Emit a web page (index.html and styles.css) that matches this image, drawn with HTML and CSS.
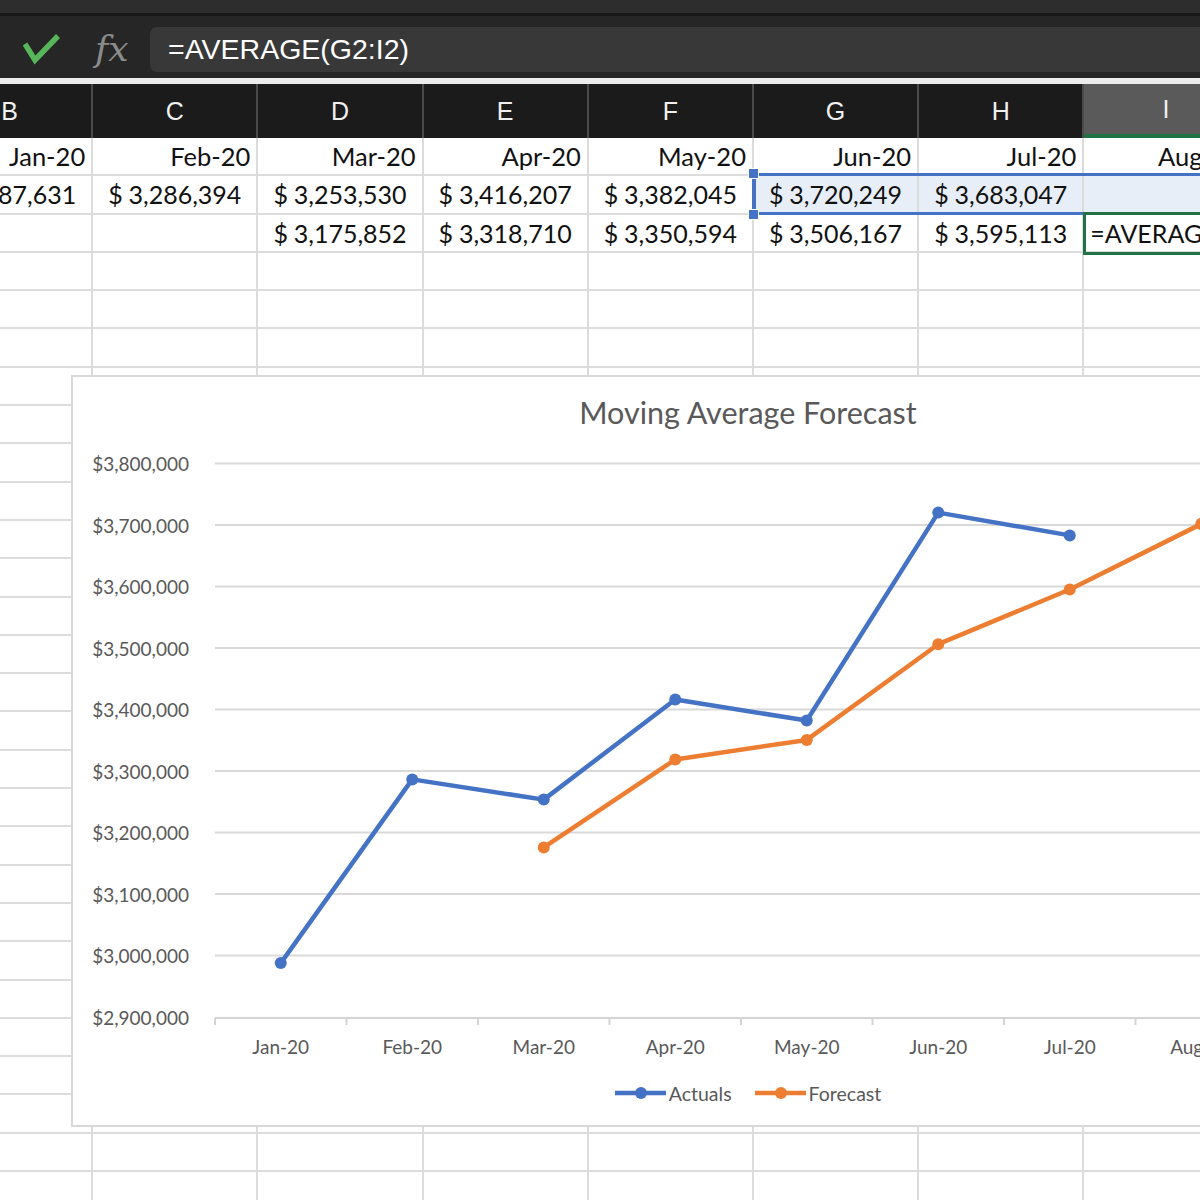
FILE: index.html
```html
<!DOCTYPE html>
<html lang="en">
<head>
<meta charset="utf-8">
<title>Moving Average Forecast</title>
<link rel="stylesheet" href="styles.css">
</head>
<body>
<div class="topband"></div>
<div class="formula-bar">
  <div class="fb-icons">
    <svg class="check" width="38" height="32" viewBox="0 0 38 32"><polyline points="2,11 12,27 35,3" fill="none" stroke="#57b65a" stroke-width="5.5" stroke-linejoin="miter"/></svg>
    <span class="fx">fx</span>
  </div>
  <div class="fb-input">=AVERAGE(G2:I2)</div>
</div>
<div class="sheet">
  <div class="col-heads">
    <div class="ch">B</div><div class="ch">C</div><div class="ch">D</div><div class="ch">E</div><div class="ch">F</div><div class="ch">G</div><div class="ch">H</div><div class="ch active">I</div>
  </div>
  <div class="row">
    <div class="c dt">Jan-20</div><div class="c dt">Feb-20</div><div class="c dt">Mar-20</div><div class="c dt">Apr-20</div><div class="c dt">May-20</div><div class="c dt">Jun-20</div><div class="c dt">Jul-20</div><div class="c dt">Aug-20</div>
  </div>
  <div class="row">
    <div class="c acc"><span>$</span><span>2,987,631</span></div>
    <div class="c acc"><span>$</span><span>3,286,394</span></div>
    <div class="c acc"><span>$</span><span>3,253,530</span></div>
    <div class="c acc"><span>$</span><span>3,416,207</span></div>
    <div class="c acc"><span>$</span><span>3,382,045</span></div>
    <div class="c acc hl"><span>$</span><span>3,720,249</span></div>
    <div class="c acc hl"><span>$</span><span>3,683,047</span></div>
    <div class="c hl"></div>
  </div>
  <div class="row">
    <div class="c"></div><div class="c"></div>
    <div class="c acc"><span>$</span><span>3,175,852</span></div>
    <div class="c acc"><span>$</span><span>3,318,710</span></div>
    <div class="c acc"><span>$</span><span>3,350,594</span></div>
    <div class="c acc"><span>$</span><span>3,506,167</span></div>
    <div class="c acc"><span>$</span><span>3,595,113</span></div>
    <div class="c fm">=AVERAGE(G2:I2)</div>
  </div>
  <div class="row"><div class="c"></div><div class="c"></div><div class="c"></div><div class="c"></div><div class="c"></div><div class="c"></div><div class="c"></div><div class="c"></div></div>
  <div class="row"><div class="c"></div><div class="c"></div><div class="c"></div><div class="c"></div><div class="c"></div><div class="c"></div><div class="c"></div><div class="c"></div></div>
  <div class="row"><div class="c"></div><div class="c"></div><div class="c"></div><div class="c"></div><div class="c"></div><div class="c"></div><div class="c"></div><div class="c"></div></div>
  <div class="row"><div class="c"></div><div class="c"></div><div class="c"></div><div class="c"></div><div class="c"></div><div class="c"></div><div class="c"></div><div class="c"></div></div>
  <div class="row"><div class="c"></div><div class="c"></div><div class="c"></div><div class="c"></div><div class="c"></div><div class="c"></div><div class="c"></div><div class="c"></div></div>
  <div class="row"><div class="c"></div><div class="c"></div><div class="c"></div><div class="c"></div><div class="c"></div><div class="c"></div><div class="c"></div><div class="c"></div></div>
  <div class="row"><div class="c"></div><div class="c"></div><div class="c"></div><div class="c"></div><div class="c"></div><div class="c"></div><div class="c"></div><div class="c"></div></div>
  <div class="row"><div class="c"></div><div class="c"></div><div class="c"></div><div class="c"></div><div class="c"></div><div class="c"></div><div class="c"></div><div class="c"></div></div>
  <div class="row"><div class="c"></div><div class="c"></div><div class="c"></div><div class="c"></div><div class="c"></div><div class="c"></div><div class="c"></div><div class="c"></div></div>
  <div class="row"><div class="c"></div><div class="c"></div><div class="c"></div><div class="c"></div><div class="c"></div><div class="c"></div><div class="c"></div><div class="c"></div></div>
  <div class="row"><div class="c"></div><div class="c"></div><div class="c"></div><div class="c"></div><div class="c"></div><div class="c"></div><div class="c"></div><div class="c"></div></div>
  <div class="row"><div class="c"></div><div class="c"></div><div class="c"></div><div class="c"></div><div class="c"></div><div class="c"></div><div class="c"></div><div class="c"></div></div>
  <div class="row"><div class="c"></div><div class="c"></div><div class="c"></div><div class="c"></div><div class="c"></div><div class="c"></div><div class="c"></div><div class="c"></div></div>
  <div class="row"><div class="c"></div><div class="c"></div><div class="c"></div><div class="c"></div><div class="c"></div><div class="c"></div><div class="c"></div><div class="c"></div></div>
  <div class="row"><div class="c"></div><div class="c"></div><div class="c"></div><div class="c"></div><div class="c"></div><div class="c"></div><div class="c"></div><div class="c"></div></div>
  <div class="row"><div class="c"></div><div class="c"></div><div class="c"></div><div class="c"></div><div class="c"></div><div class="c"></div><div class="c"></div><div class="c"></div></div>
  <div class="row"><div class="c"></div><div class="c"></div><div class="c"></div><div class="c"></div><div class="c"></div><div class="c"></div><div class="c"></div><div class="c"></div></div>
  <div class="row"><div class="c"></div><div class="c"></div><div class="c"></div><div class="c"></div><div class="c"></div><div class="c"></div><div class="c"></div><div class="c"></div></div>
  <div class="row"><div class="c"></div><div class="c"></div><div class="c"></div><div class="c"></div><div class="c"></div><div class="c"></div><div class="c"></div><div class="c"></div></div>
  <div class="row"><div class="c"></div><div class="c"></div><div class="c"></div><div class="c"></div><div class="c"></div><div class="c"></div><div class="c"></div><div class="c"></div></div>
  <div class="row"><div class="c"></div><div class="c"></div><div class="c"></div><div class="c"></div><div class="c"></div><div class="c"></div><div class="c"></div><div class="c"></div></div>
  <div class="row"><div class="c"></div><div class="c"></div><div class="c"></div><div class="c"></div><div class="c"></div><div class="c"></div><div class="c"></div><div class="c"></div></div>
  <div class="row"><div class="c"></div><div class="c"></div><div class="c"></div><div class="c"></div><div class="c"></div><div class="c"></div><div class="c"></div><div class="c"></div></div>
  <div class="row"><div class="c"></div><div class="c"></div><div class="c"></div><div class="c"></div><div class="c"></div><div class="c"></div><div class="c"></div><div class="c"></div></div>
  <div class="row"><div class="c"></div><div class="c"></div><div class="c"></div><div class="c"></div><div class="c"></div><div class="c"></div><div class="c"></div><div class="c"></div></div>

  <div class="selection"><i class="handle h-top"></i><i class="handle h-bot"></i></div>
  <div class="active-cell"></div>

  <div class="chart">
    <div class="chart-title">Moving Average Forecast</div>
    <svg class="plot" width="1350" height="630" viewBox="73 435 1350 630">
      <g class="grid-lines">
        <line x1="215" x2="1423" y1="463.5" y2="463.5"/>
        <line x1="215" x2="1423" y1="525" y2="525"/>
        <line x1="215" x2="1423" y1="586.5" y2="586.5"/>
        <line x1="215" x2="1423" y1="648" y2="648"/>
        <line x1="215" x2="1423" y1="709.5" y2="709.5"/>
        <line x1="215" x2="1423" y1="771" y2="771"/>
        <line x1="215" x2="1423" y1="832.5" y2="832.5"/>
        <line x1="215" x2="1423" y1="894" y2="894"/>
        <line x1="215" x2="1423" y1="955.5" y2="955.5"/>
      </g>
      <g class="axis">
        <line x1="215" x2="1423" y1="1018" y2="1018"/>
        <line x1="215" x2="215" y1="1018" y2="1025"/>
        <line x1="346.5" x2="346.5" y1="1018" y2="1025"/>
        <line x1="478" x2="478" y1="1018" y2="1025"/>
        <line x1="609.5" x2="609.5" y1="1018" y2="1025"/>
        <line x1="741" x2="741" y1="1018" y2="1025"/>
        <line x1="872.5" x2="872.5" y1="1018" y2="1025"/>
        <line x1="1004" x2="1004" y1="1018" y2="1025"/>
        <line x1="1135.5" x2="1135.5" y1="1018" y2="1025"/>
        <line x1="1267" x2="1267" y1="1018" y2="1025"/>
      </g>
      <g class="ylabels">
        <text x="189" y="463.5">$3,800,000</text>
        <text x="189" y="525">$3,700,000</text>
        <text x="189" y="586.5">$3,600,000</text>
        <text x="189" y="648">$3,500,000</text>
        <text x="189" y="709.5">$3,400,000</text>
        <text x="189" y="771">$3,300,000</text>
        <text x="189" y="832.5">$3,200,000</text>
        <text x="189" y="894">$3,100,000</text>
        <text x="189" y="955.5">$3,000,000</text>
        <text x="189" y="1017">$2,900,000</text>
      </g>
      <g class="xlabels">
        <text x="280.75" y="1046">Jan-20</text>
        <text x="412.25" y="1046">Feb-20</text>
        <text x="543.75" y="1046">Mar-20</text>
        <text x="675.25" y="1046">Apr-20</text>
        <text x="806.75" y="1046">May-20</text>
        <text x="938.25" y="1046">Jun-20</text>
        <text x="1069.75" y="1046">Jul-20</text>
        <text x="1201.25" y="1046">Aug-20</text>
      </g>
      <g class="series actual">
        <polyline points="280.75,963.1 412.25,779.4 543.75,799.6 675.25,699.5 806.75,720.5 938.25,512.6 1069.75,535.4"/>
        <circle cx="280.75" cy="963.1" r="6"/>
        <circle cx="412.25" cy="779.4" r="6"/>
        <circle cx="543.75" cy="799.6" r="6"/>
        <circle cx="675.25" cy="699.5" r="6"/>
        <circle cx="806.75" cy="720.5" r="6"/>
        <circle cx="938.25" cy="512.6" r="6"/>
        <circle cx="1069.75" cy="535.4" r="6"/>
      </g>
      <g class="series forecast">
        <polyline points="543.75,847.4 675.25,759.5 806.75,739.9 938.25,644.2 1069.75,589.5 1201.25,524"/>
        <circle cx="543.75" cy="847.4" r="6"/>
        <circle cx="675.25" cy="759.5" r="6"/>
        <circle cx="806.75" cy="739.9" r="6"/>
        <circle cx="938.25" cy="644.2" r="6"/>
        <circle cx="1069.75" cy="589.5" r="6"/>
        <circle cx="1201.25" cy="524" r="6"/>
      </g>
    </svg>
    <div class="legend">
      <div class="legend-item">
        <svg width="51" height="14" viewBox="0 0 51 14"><line x1="0" y1="7" x2="51" y2="7" stroke="#4472c4" stroke-width="4.5"/><circle cx="26" cy="7" r="6" fill="#4472c4"/></svg>
        <span>Actuals</span>
      </div>
      <div class="legend-item">
        <svg width="51" height="14" viewBox="0 0 51 14"><line x1="0" y1="7" x2="51" y2="7" stroke="#ed7d31" stroke-width="4.5"/><circle cx="26" cy="7" r="6" fill="#ed7d31"/></svg>
        <span>Forecast</span>
      </div>
    </div>
  </div>
</div>
</body>
</html>
```
FILE: styles.css
```css
* { box-sizing: border-box; }
html, body { margin: 0; padding: 0; }
body {
  width: 1200px;
  height: 1200px;
  overflow: hidden;
  background: #ffffff;
  font-family: Lato, "Liberation Sans", sans-serif;
  color: #111;
}

/* ---------- top chrome ---------- */
.topband {
  height: 16px;
  background: #2d2d2d;
  border-bottom: 3px solid #171717;
}
.formula-bar {
  height: 68px;
  background: #262626;
  border-bottom: 6px solid #ececec;
  display: flex;
  align-items: flex-start;
}
.fb-icons {
  width: 150px;
  flex: none;
  display: flex;
  align-items: flex-start;
  padding-left: 23px;
}
.check { margin-top: 17px; flex: none; }
.fx {
  margin-left: 34px;
  margin-top: 13px;
  font-family: "DejaVu Serif", "Liberation Serif", serif;
  font-style: italic;
  font-size: 36px;
  line-height: 40px;
  color: #8b8b8b;
}
.fb-input {
  flex: 1;
  margin-top: 11px;
  height: 45px;
  background: #383838;
  border-radius: 7px 0 0 7px;
  padding-left: 18px;
  font-family: "Liberation Sans", sans-serif;
  font-size: 28.5px;
  line-height: 45px;
  color: #ffffff;
}

/* ---------- sheet ---------- */
.sheet {
  position: relative;
  width: 1200px;
}
.col-heads, .row {
  display: grid;
  grid-template-columns: repeat(8, 165.2px);
  margin-left: -72px;
}
.col-heads {
  height: 54px;
  background: #1b1b1b;
}
.ch {
  border-right: 2px solid #4a4a4a;
  color: #f0f0f0;
  font-family: "Liberation Sans", sans-serif;
  font-size: 25px;
  line-height: 54px;
  text-align: center;
}
.ch.active {
  background: #5a5a5a;
  border-bottom: 4px solid #217346;
  line-height: 50px;
}
.row { height: 38.3px; }
.c {
  border-right: 2px solid #dcdcdc;
  border-bottom: 2px solid #dcdcdc;
  font-size: 25px;
  line-height: 36px;
  white-space: nowrap;
  color: #111;
}
.dt { text-align: right; padding-right: 6px; font-size: 25.5px; }
.acc {
  display: flex;
  justify-content: space-between;
  padding: 0 15px 0 15px;
}
.hl { background: #e8eef8; }
.fm { padding-left: 6px; overflow: visible; }

/* selection overlays */
.selection {
  position: absolute;
  left: 752px;
  top: 89px;
  width: 520px;
  height: 42px;
  border-top: 3px solid #4472c4;
  border-bottom: 3px solid #4472c4;
  border-left: 4px solid #4472c4;
}
.handle {
  position: absolute;
  left: -8px;
  width: 11px;
  height: 11px;
  background: #4472c4;
  border: 1px solid #ffffff;
}
.h-top { top: -8px; }
.h-bot { bottom: -8px; }
.active-cell {
  position: absolute;
  left: 1083px;
  top: 128px;
  width: 200px;
  height: 43px;
  border: 3px solid #217346;
}

/* ---------- chart ---------- */
.chart {
  position: absolute;
  left: 71px;
  top: 291px;
  width: 1354px;
  height: 752px;
  background: #ffffff;
  border: 2px solid #d9d9d9;
  display: flex;
  flex-direction: column;
}
.chart-title {
  height: 58px;
  padding-top: 15px;
  text-align: center;
  font-size: 30.5px;
  line-height: 40px;
  color: #595959;
}
.plot { display: block; flex: none; }
.grid-lines line { stroke: #d9d9d9; stroke-width: 2; }
.axis line { stroke: #d4d4d4; stroke-width: 2; }
.plot text {
  font-family: Lato, "Liberation Sans", sans-serif;
  font-size: 19px;
  fill: #595959;
  dominant-baseline: central;
}
.ylabels text { text-anchor: end; }
.xlabels text { text-anchor: middle; }
.series polyline { fill: none; stroke-width: 4.5; stroke-linejoin: round; stroke-linecap: round; }
.actual polyline { stroke: #4472c4; }
.actual circle { fill: #4472c4; }
.forecast polyline { stroke: #ed7d31; }
.forecast circle { fill: #ed7d31; }

.legend {
  height: 56px;
  display: flex;
  justify-content: center;
  align-items: center;
  gap: 23px;
}
.legend-item {
  display: flex;
  align-items: center;
  gap: 3px;
  font-size: 19.5px;
  color: #595959;
}
.legend-item svg { display: block; }
```
